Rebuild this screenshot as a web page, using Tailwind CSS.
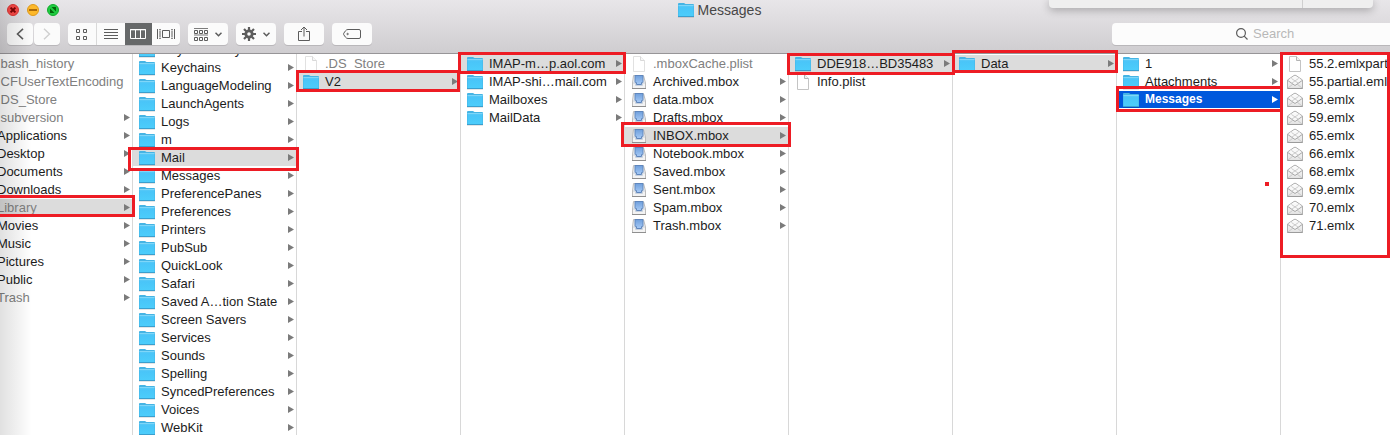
<!DOCTYPE html>
<html lang="en">
<head>
  <meta charset="UTF-8" />
  <meta name="viewport" content="width=device-width, initial-scale=1.0" />
  <script src="https://cdn.jsdelivr.net/npm/@tailwindcss/browser@4"></script>
  <title>Messages</title>
</head>
<body class="relative h-screen flex flex-col overflow-hidden bg-white font-['Liberation_Sans',Arial,sans-serif] text-[13px] text-[#1c1c1c]">

  <!-- Icon set -->
  <svg class="absolute w-0 h-0" aria-hidden="true">
    <defs>
      <linearGradient id="folderFill" x1="0" y1="0" x2="0" y2="1">
        <stop offset="0" stop-color="#5fcaf6" />
        <stop offset="0.25" stop-color="#49c5f8" />
        <stop offset="1" stop-color="#4ccdfb" />
      </linearGradient>
      <linearGradient id="trayFill" x1="0" y1="0" x2="0" y2="1">
        <stop offset="0" stop-color="#6f9fdc" />
        <stop offset="1" stop-color="#a6caf6" />
      </linearGradient>
      <linearGradient id="mailFill" x1="0" y1="0" x2="0" y2="1">
        <stop offset="0" stop-color="#ffffff" />
        <stop offset="1" stop-color="#e2e2e2" />
      </linearGradient>
    </defs>
    <symbol id="folder" viewBox="0 0 16 16">
      <path d="M0 2Q0 1 1 1H6L7.5 2H15Q16 2 16 3V14.5H0Z" fill="#45b4e4" />
      <path d="M0.5 3H15.5V14H0.5Z" fill="url(#folderFill)" />
      <path d="M0.5 3.5H15.5" stroke="#7fd6f8" />
      <path d="M0 14.5H16" stroke="#3a9fce" />
      <path d="M0 15.5H16" stroke="#000" stroke-opacity="0.1" />
    </symbol>
    <symbol id="file" viewBox="0 0 16 16">
      <path d="M2.5 0.5H9.5L13.5 4.5V15.5H2.5Z" fill="#fff" stroke="#c4c4c4" />
      <path d="M9.5 0.5V4.5H13.5" fill="#f2f2f2" stroke="#b4b4b4" />
    </symbol>
    <symbol id="mbox" viewBox="0 0 16 16">
      <path d="M2.5 1.5H12.5L14.5 9V14.5H1.5V9Z" fill="#f3f3f3" stroke="#bcbcbc" />
      <path d="M4 1.5H12V8.5H10.5V10.5H5.5V8.5H4Z" fill="url(#trayFill)" stroke="#5f86bd" />
      <path d="M2 9H4.5V11.5H11.5V9H14" fill="none" stroke="#c9d2de" />
      <path d="M1 14.5H15" stroke="#8f8f8f" />
    </symbol>
    <symbol id="mail" viewBox="0 0 16 16">
      <path d="M0.5 6L7 1.5Q8 1 9 1.5L15.5 6V14.5H0.5Z" fill="url(#mailFill)" stroke="#b0b0b0" />
      <path d="M3 4.5H13V8L8 11.5L3 8Z" fill="#f8f8f8" />
      <path d="M0.8 6.5L8 11.5L15.2 6.5" fill="none" stroke="#a8a8a8" />
      <path d="M1 14L6 10M15 14L10 10M4.5 4.5L11 9M11.5 4.5L5 9" fill="none" stroke="#c0c0c0" stroke-width="0.8" />
      <path d="M0.5 14.5H15.5" stroke="#9c9c9c" />
    </symbol>
    <symbol id="arrow" viewBox="0 0 6 7">
      <path d="M0 0L6 3.5L0 7Z" fill="currentColor" />
    </symbol>
  </svg>

  <!-- Window header -->
  <header class="shrink-0 h-[54px] border-b border-[#979598] bg-linear-to-b from-[#e8e6e9] to-[#cfcdd0]">
    <div class="h-5 flex items-center">
      <div class="flex gap-2 pl-[7px]">
        <button aria-label="Close" class="w-3 h-3"><svg viewBox="0 0 12 12"><circle cx="6" cy="6" r="5.5" fill="#fb4a48" stroke="#dd3835" /><path d="M3.6 3.6L8.4 8.4M8.4 3.6L3.6 8.4" stroke="#7d0403" stroke-width="2" /></svg></button>
        <button aria-label="Minimize" class="w-3 h-3"><svg viewBox="0 0 12 12"><circle cx="6" cy="6" r="5.5" fill="#fdb829" stroke="#df9a1b" /><path d="M2 6H10" stroke="#985700" stroke-width="1.6" /></svg></button>
        <button aria-label="Zoom" class="w-3 h-3"><svg viewBox="0 0 12 12"><circle cx="6" cy="6" r="5.5" fill="#1fcb41" stroke="#12ab2c" /><path d="M3 4.5V9H7.5ZM4.5 3H9V7.5Z" fill="#03650a" /></svg></button>
      </div>
      <h1 class="flex-1 flex items-center justify-center gap-1 pr-[10px] text-[14px] text-[#474747]">
        <svg class="w-4 h-4"><use href="#folder" /></svg>Messages
      </h1>
    </div>

    <div class="flex gap-2 pt-[3px] pl-[7px] text-[#5c5c5c]">
      <div class="flex gap-px">
        <button aria-label="Back" class="w-[26px] h-[22px] flex items-center justify-center bg-[#fbfbfb] rounded-[4px] shadow-[0_1px_0_#b9b7ba]">
          <svg class="w-2 h-3" viewBox="0 0 8 12" fill="none" stroke="currentColor" stroke-width="1.6"><path d="M7 0.8L1.5 6L7 11.2" /></svg>
        </button>
        <button aria-label="Forward" class="w-[26px] h-[22px] flex items-center justify-center bg-[#fbfbfb] rounded-[4px] shadow-[0_1px_0_#b9b7ba] text-[#cfcfcf]">
          <svg class="w-2 h-3" viewBox="0 0 8 12" fill="none" stroke="currentColor" stroke-width="1.4"><path d="M1 0.8L6.5 6L1 11.2" /></svg>
        </button>
      </div>
      <div class="flex w-[112px] h-[22px] bg-[#fbfbfb] rounded-[4px] overflow-hidden shadow-[0_1px_0_#b9b7ba]">
        <button aria-label="Icon view" class="flex-1 flex items-center justify-center border-r border-[#d9d9d9]">
          <svg class="w-[11px] h-[11px]" viewBox="0 0 11 11" fill="none" stroke="currentColor"><path d="M0.5 0.5H3.5V3.5H0.5ZM7.5 0.5H10.5V3.5H7.5ZM0.5 7.5H3.5V10.5H0.5ZM7.5 7.5H10.5V10.5H7.5Z" /></svg>
        </button>
        <button aria-label="List view" class="flex-1 flex items-center justify-center">
          <svg class="w-[14px] h-[10px]" viewBox="0 0 14 10" stroke="currentColor"><path d="M0 0.5H14M0 3.5H14M0 6.5H14M0 9.5H14" /></svg>
        </button>
        <button aria-label="Column view" class="flex-1 flex items-center justify-center bg-[#666869] text-white">
          <svg class="w-4 h-[10px]" viewBox="0 0 16 10" fill="none" stroke="currentColor"><path d="M0.5 0.5H15.5V9.5H0.5ZM5.5 0V10M10.5 0V10" /><path d="M0 0.8H16" /></svg>
        </button>
        <button aria-label="Cover flow" class="flex-1 flex items-center justify-center">
          <svg class="w-[18px] h-[10px]" viewBox="0 0 18 10" fill="none" stroke="currentColor"><path d="M5.5 1.5H12.5V8.5H5.5ZM0.5 0V10M17.5 0V10M3 1.5V8.5M15 1.5V8.5" /><path d="M2 0.5H4M2 9.5H4M14 0.5H16M14 9.5H16" stroke-width="0.7" /></svg>
        </button>
      </div>
      <button aria-label="Arrange" class="w-10 h-[22px] flex items-center justify-center gap-[7px] bg-[#fbfbfb] rounded-[4px] shadow-[0_1px_0_#b9b7ba]">
        <svg class="w-[14px] h-[13px]" viewBox="0 0 14 13" fill="none" stroke="currentColor"><path d="M0 0.5H14M0 7H14" stroke-width="0.8" /><path d="M0.5 2.5H3.5V5.5H0.5ZM5.5 2.5H8.5V5.5H5.5ZM10.5 2.5H13.5V5.5H10.5ZM0.5 9.5H3.5V12.5H0.5ZM5.5 9.5H8.5V12.5H5.5ZM10.5 9.5H13.5V12.5H10.5Z" /></svg>
        <svg class="w-[7px] h-[5px]" viewBox="0 0 7 5" fill="none" stroke="currentColor" stroke-width="1.5"><path d="M0.5 0.8L3.5 3.8L6.5 0.8" /></svg>
      </button>
      <button aria-label="Action" class="w-10 h-[22px] flex items-center justify-center gap-[7px] bg-[#fbfbfb] rounded-[4px] shadow-[0_1px_0_#b9b7ba]">
        <svg class="w-[14px] h-[14px]" viewBox="0 0 14 14" fill="none" stroke="currentColor"><circle cx="7" cy="7" r="3.2" stroke-width="2.8" /><path d="M7 0V3M7 11V14M0 7H3M11 7H14M2 2L4.2 4.2M9.8 9.8L12 12M12 2L9.8 4.2M4.2 9.8L2 12" stroke-width="2.2" /></svg>
        <svg class="w-[7px] h-[5px]" viewBox="0 0 7 5" fill="none" stroke="currentColor" stroke-width="1.5"><path d="M0.5 0.8L3.5 3.8L6.5 0.8" /></svg>
      </button>
      <button aria-label="Share" class="w-10 h-[22px] flex items-center justify-center bg-[#fbfbfb] rounded-[4px] shadow-[0_1px_0_#b9b7ba]">
        <svg class="w-[12px] h-[16px]" viewBox="0 0 12 16" fill="none" stroke="currentColor"><path d="M4 5.5H0.5V14.5H11.5V5.5H8M6 10.5V1M3 4L6 1L9 4" /></svg>
      </button>
      <button aria-label="Tags" class="w-10 h-[22px] flex items-center justify-center bg-[#fbfbfb] rounded-[4px] shadow-[0_1px_0_#b9b7ba]">
        <svg class="w-[18px] h-[10px]" viewBox="0 0 18 10" fill="none" stroke="currentColor"><path d="M5 0.5H16Q17.5 0.5 17.5 2V8Q17.5 9.5 16 9.5H5Q3.5 9.5 2.5 8.2L0.8 5.8Q0.3 5 0.8 4.2L2.5 1.8Q3.5 0.5 5 0.5Z" /><circle cx="4.6" cy="5" r="0.7" /></svg>
      </button>
      <label class="ml-auto w-[278px] h-[22px] flex items-center gap-[5px] pl-[124px] bg-[#fcfcfc] rounded-l-[4px] shadow-[0_1px_0_#b9b7ba]">
        <svg class="shrink-0 w-3 h-3" viewBox="0 0 12 12" fill="none" stroke="currentColor" stroke-width="1.2"><circle cx="5" cy="5" r="4.4" /><path d="M8.2 8.2L11.5 11.5" /></svg>
        <input type="text" placeholder="Search" aria-label="Search" class="min-w-0 flex-1 bg-transparent outline-none placeholder:text-[#b8b8b8]" />
      </label>
    </div>
  </header>

  <!-- Column browser -->
  <main id="browser" class="flex-1 min-h-0 flex -ml-[31px] overflow-hidden"></main>

  <!-- Panel hanging over the top edge -->
  <div class="absolute top-0 right-[17px] w-[324px] h-2 flex rounded-b-[4px] bg-[#efefef] shadow-[0_2px_8px_rgba(0,0,0,0.3)]">
    <div class="w-[254px] border-r border-[#cfcfcf]"></div>
  </div>

  <!-- Soft shade along the left edge -->
  <div class="absolute inset-y-0 left-0 w-8 bg-linear-to-r from-black/12 to-transparent pointer-events-none"></div>

  <!-- Red annotations -->
  <div class="absolute inset-0 overflow-hidden pointer-events-none">
    <div class="absolute left-[-3px] top-[195px] w-[138px] h-[22px] border-3 border-[#ed1c24]"></div>
    <div class="absolute left-[128px] top-[147px] w-[171px] h-[24px] border-3 border-[#ed1c24]"></div>
    <div class="absolute left-[296px] top-[70px] w-[164px] h-[22px] border-3 border-[#ed1c24]"></div>
    <div class="absolute left-[458px] top-[52px] w-[168px] h-[22px] border-3 border-[#ed1c24]"></div>
    <div class="absolute left-[621px] top-[122px] w-[170px] h-[25px] border-3 border-[#ed1c24]"></div>
    <div class="absolute left-[787px] top-[53px] w-[168px] h-[22px] border-3 border-[#ed1c24]"></div>
    <div class="absolute left-[952px] top-[50px] w-[166px] h-[23px] border-3 border-[#ed1c24]"></div>
    <div class="absolute left-[1116px] top-[86px] w-[167px] h-[26px] border-3 border-[#ed1c24]"></div>
    <div class="absolute left-[1280px] right-0 top-[52px] h-[206px] border-3 border-[#ed1c24]"></div>
    <div class="absolute left-[1265px] top-[182px] size-1 bg-[#ed1c24]"></div>
  </div>

<script>
  // item: [name, icon, flags]  flags: d = dimmed, s = selected path, a = active selection, x = no arrow
  const columns = [
    { items: [
      ['.bash_history', 'file', 'dx'], ['.CFUserTextEncoding', 'file', 'dx'], ['.DS_Store', 'file', 'dx'],
      ['.subversion', 'folder', 'd'], ['Applications', 'folder', ''], ['Desktop', 'folder', ''],
      ['Documents', 'folder', ''], ['Downloads', 'folder', ''], ['Library', 'folder', 'ds'],
      ['Movies', 'folder', ''], ['Music', 'folder', ''], ['Pictures', 'folder', ''],
      ['Public', 'folder', ''], ['Trash', 'folder', 'd'],
    ] },
    { scrolled: true, items: [
      'Keyboard Layouts', 'Keychains', 'LanguageModeling', 'LaunchAgents', 'Logs', 'm', 'Mail', 'Messages',
      'PreferencePanes', 'Preferences', 'Printers', 'PubSub', 'QuickLook', 'Safari', 'Saved A…tion State',
      'Screen Savers', 'Services', 'Sounds', 'Spelling', 'SyncedPreferences', 'Voices', 'WebKit',
    ].map(name => [name, 'folder', name === 'Mail' ? 's' : '']) },
    { items: [['.DS_Store', 'file', 'dx'], ['V2', 'folder', 's']] },
    { items: [
      ['IMAP-m…p.aol.com', 'folder', 's'], ['IMAP-shi…mail.com', 'folder', ''],
      ['Mailboxes', 'folder', ''], ['MailData', 'folder', ''],
    ] },
    { items: [
      ['.mboxCache.plist', 'file', 'dx'], ['Archived.mbox', 'mbox', ''], ['data.mbox', 'mbox', ''],
      ['Drafts.mbox', 'mbox', ''], ['INBOX.mbox', 'mbox', 's'], ['Notebook.mbox', 'mbox', ''],
      ['Saved.mbox', 'mbox', ''], ['Sent.mbox', 'mbox', ''], ['Spam.mbox', 'mbox', ''], ['Trash.mbox', 'mbox', ''],
    ] },
    { items: [['DDE918…BD35483', 'folder', 's'], ['Info.plist', 'file', 'x']] },
    { items: [['Data', 'folder', 's']] },
    { items: [['1', 'folder', ''], ['Attachments', 'folder', ''], ['Messages', 'folder', 'a']] },
    { last: true, items: [
      ['55.2.emlxpart', 'file', 'x'], ['55.partial.emlx', 'mail', 'x'], ['58.emlx', 'mail', 'x'],
      ['59.emlx', 'mail', 'x'], ['65.emlx', 'mail', 'x'], ['66.emlx', 'mail', 'x'], ['68.emlx', 'mail', 'x'],
      ['69.emlx', 'mail', 'x'], ['70.emlx', 'mail', 'x'], ['71.emlx', 'mail', 'x'],
    ] },
  ];

  function renderItem([name, icon, flags]) {
    const has = f => flags.includes(f);
    const row = has('a') ? 'bg-[#0058dc] text-white' : has('s') ? 'bg-[#dcdcdc]' : '';
    const label = has('a') ? 'text-[12px] font-bold' : has('d') ? 'text-[#808080]' : '';
    const faded = has('d') && icon === 'file' ? 'opacity-50' : '';
    const arrow = has('x') ? '' :
      `<svg class="shrink-0 w-[6px] h-[7px] ${has('a') ? 'text-white' : 'text-[#7b7b7b]'}"><use href="#arrow" /></svg>`;
    return `<li class="h-[18px]"><button class="w-full h-[17px] flex items-center pl-[6px] pr-[2px] text-left ${row}">
      <svg class="shrink-0 w-4 h-4 mr-[6px] ${faded}"><use href="#${icon}" /></svg>
      <span class="flex-1 whitespace-nowrap leading-[17px] ${label}">${name}</span>${arrow}</button></li>`;
  }

  document.getElementById('browser').innerHTML = columns.map(col => `
    <ul class="${col.last ? 'flex-1 min-w-0' : 'shrink-0 w-[164px] border-r border-[#d8d8d8]'} ${col.scrolled ? '-mt-[13px]' : 'pt-px'}">
      ${col.items.map(renderItem).join('')}
    </ul>`).join('');
</script>

</body>
</html>
